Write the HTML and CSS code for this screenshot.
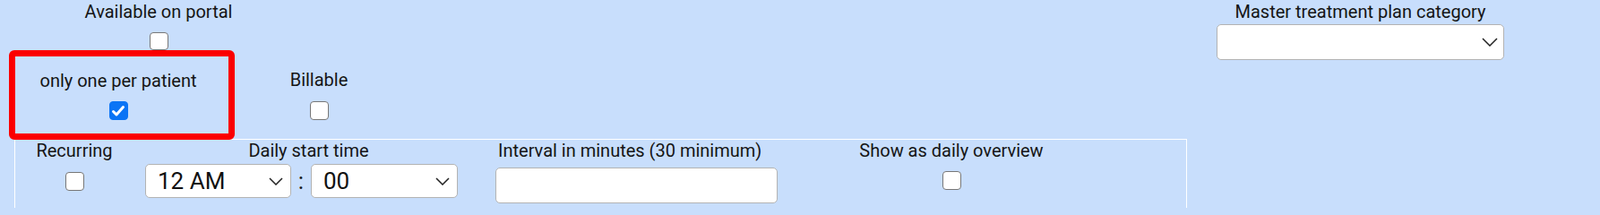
FILE: index.html
```html
<!DOCTYPE html>
<html lang="en">
<head>
<meta charset="utf-8">
<title>Treatment plan settings</title>
<link rel="stylesheet" href="styles.css">
</head>
<body>
<div class="page">
  <div class="left">
    <div class="row-a">
      <div class="cell cell-portal">
        <span class="lbl">Available on portal</span>
        <span class="cb"></span>
      </div>
    </div>
    <div class="row-b">
      <div class="cell cell-once">
        <span class="lbl">only one per patient</span>
        <span class="cb checked"><svg width="18" height="18" viewBox="0 0 18 18"><polyline points="3.5,9.5 7,13 14.5,4.5" fill="none" stroke="#fff" stroke-width="3" stroke-linecap="round" stroke-linejoin="round"/></svg></span>
      </div>
      <div class="cell cell-bill">
        <span class="lbl">Billable</span>
        <span class="cb"></span>
      </div>
    </div>
    <div class="sched">
      <div class="cell cell-rec">
        <span class="lbl">Recurring</span>
        <span class="cb"></span>
      </div>
      <div class="cell cell-daily">
        <span class="lbl">Daily start time</span>
        <div class="time">
          <div class="select sel-hour"><span>12 AM</span><svg class="chev" width="16" height="9" viewBox="0 0 16 9"><polyline points="1,1 8,8 15,1" fill="none" stroke="#222" stroke-width="1.5"/></svg></div>
          <span class="colon">:</span>
          <div class="select sel-min"><span>00</span><svg class="chev" width="16" height="9" viewBox="0 0 16 9"><polyline points="1,1 8,8 15,1" fill="none" stroke="#222" stroke-width="1.5"/></svg></div>
        </div>
      </div>
      <div class="cell cell-int">
        <span class="lbl">Interval in minutes (30 minimum)</span>
        <input class="text-input" type="text">
      </div>
      <div class="cell cell-show">
        <span class="lbl">Show as daily overview</span>
        <span class="cb"></span>
      </div>
    </div>
  </div>
  <div class="right">
    <div class="cell cell-master">
      <span class="lbl">Master treatment plan category</span>
      <div class="select sel-master"><span></span><svg class="chev" width="18" height="10" viewBox="0 0 18 10"><polyline points="1,1 9,9 17,1" fill="none" stroke="#222" stroke-width="1.5"/></svg></div>
    </div>
  </div>
</div>
</body>
</html>
```

FILE: styles.css
```css
html, body {
  margin: 0;
  padding: 0;
  background: #c8defc;
}

body {
  width: 1786px;
  height: 232px;
  overflow: hidden;
  font-family: Roboto, "Noto Sans", "Liberation Sans", sans-serif;
  color: #151515;
}

.page {
  display: flex;
  align-items: flex-start;
}

.left {
  width: 1324px;
  flex: none;
}

.right {
  margin-left: 34px;
  width: 321px;
  flex: none;
}

.cell {
  display: flex;
  flex-direction: column;
  align-items: center;
  flex: none;
  box-sizing: border-box;
}

.lbl {
  font-size: 20px;
  line-height: 24px;
  white-space: nowrap;
}

.cb {
  width: 21px;
  height: 21px;
  box-sizing: border-box;
  border: 1.5px solid #777;
  border-radius: 4px;
  background: #fff;
  display: flex;
  align-items: center;
  justify-content: center;
}

.cb.checked {
  background: #0b74f5;
  border-color: #0b74f5;
}

/* row A */
.row-a {
  height: 56px;
  display: flex;
}

.cell-portal {
  margin-left: 77px;
  width: 200px;
  padding-top: 1px;
}

.cell-portal .cb {
  margin-top: 11px;
}

/* row B */
.row-b {
  height: 99px;
  display: flex;
  align-items: flex-start;
}

.cell-once {
  margin-left: 10px;
  width: 252px;
  height: 100px;
  border: 7px solid #fb0000;
  border-radius: 6px;
  padding-top: 15px;
  padding-right: 8px;
}

.cell-once .cb {
  margin-top: 11px;
}

.cell-bill {
  margin-left: 34px;
  width: 120px;
  padding-top: 21px;
}

.cell-bill .cb {
  margin-top: 12px;
}

/* schedule box (continues below the visible frame) */
.sched {
  margin-left: 16px;
  width: 1309px;
  height: 77px;
  box-sizing: border-box;
  border: 1px solid #fff;
  border-bottom: none;
  display: flex;
  align-items: flex-start;
}

.cell-rec {
  width: 132px;
}

.cell-rec .cb {
  margin-top: 12px;
}

.cell-daily {
  margin-left: 13px;
  width: 365px;
}

.time {
  align-self: flex-start;
  display: flex;
  align-items: center;
  margin-top: 3px;
}

.select {
  height: 38px;
  box-sizing: border-box;
  border: 1px solid #b3b3b3;
  border-radius: 5px;
  background: #fff;
  display: flex;
  align-items: center;
  justify-content: space-between;
  padding: 0 8px 0 13px;
  font-size: 26px;
  color: #111;
}

.chev {
  flex: none;
}

.sel-hour {
  width: 163px;
}

.sel-min {
  width: 164px;
}

.colon {
  width: 22px;
  text-align: center;
  font-size: 26px;
  line-height: 38px;
}

.cell-int {
  margin-left: 26px;
  width: 315px;
  align-items: flex-start;
}

.cell-int .lbl {
  padding-left: 3px;
}

.text-input {
  appearance: none;
  margin: 7px 0 0 0;
  width: 315px;
  height: 40px;
  box-sizing: border-box;
  border: 1px solid #b3b3b3;
  border-radius: 5px;
  background: #fff;
  font-size: 20px;
  font-family: inherit;
}

.cell-show {
  margin-left: 84px;
  width: 220px;
}

.cell-show .cb {
  margin-top: 11px;
}

/* master column */
.cell-master {
  width: 321px;
  padding-top: 1px;
}

.sel-master {
  margin-top: 2px;
  width: 321px;
  height: 40px;
  padding-right: 6px;
}
```
